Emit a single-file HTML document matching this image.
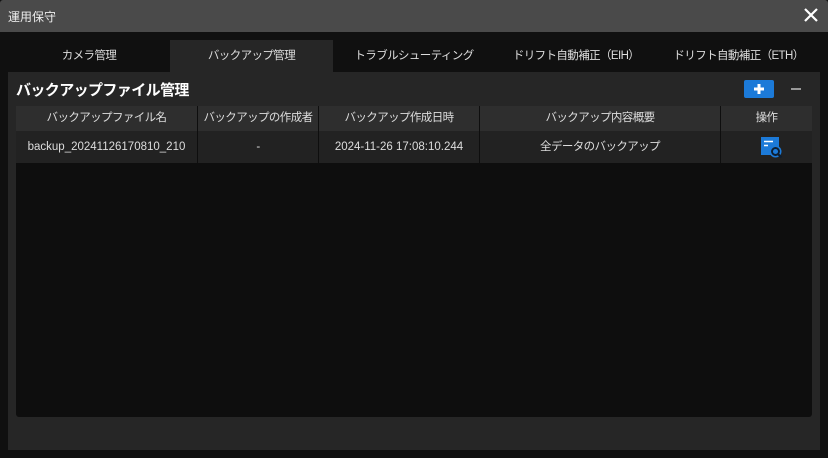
<!DOCTYPE html>
<html><head><meta charset="utf-8"><style>
*{margin:0;padding:0;box-sizing:border-box}
body{width:828px;height:458px;background:#101010;font-family:"Liberation Sans","Noto Sans CJK JP",sans-serif;color:#e6e6e6;position:relative;overflow:hidden;font-size:12px}
.title{position:absolute;left:0;top:0;width:828px;height:32px;background:#4a4a4a;border-radius:3px 3px 0 0}
.title span{position:absolute;left:8px;top:8px;font-size:12px;color:#eee}
.x{position:absolute;right:10px;top:8px}
.tab{position:absolute;top:40px;height:32px;line-height:32px;text-align:center;font-size:11.5px;letter-spacing:-0.6px;color:#ddd}
.panel{position:absolute;left:8px;top:72px;width:812px;height:378px;background:#262626}
.h{position:absolute;left:16px;top:79px;font-size:15px;letter-spacing:-0.6px;font-weight:bold;color:#fff}
.plus{position:absolute;left:744px;top:80px;width:30px;height:18px;background:#1c7ad8;border-radius:2px}
.minus{position:absolute;left:791px;top:88px;width:10px;height:2px;background:#999}
.tbl{position:absolute;left:16px;top:106px;width:796px;height:311px;background:#0e0e0e;border-radius:0 0 3px 3px}
.row{position:absolute;left:0;width:796px}
.c{position:absolute;top:0;height:100%;text-align:center;border-right:1px solid #0e0e0e;font-size:11.5px;color:#ddd;letter-spacing:-0.6px}
.n{letter-spacing:0}
</style></head><body>
<div class="title"><span>運用保守</span>
<svg class="x" width="14" height="14" viewBox="0 0 14 14"><path d="M1 1L13 13M13 1L1 13" stroke="#fff" stroke-width="2.2"/></svg></div>
<div class="tab" style="left:8px;width:162px">カメラ管理</div>
<div class="tab" style="left:170px;width:163px;background:#262626">バックアップ管理</div>
<div class="tab" style="left:333px;width:162px">トラブルシューティング</div>
<div class="tab" style="left:495px;width:162px">ドリフト自動補正（EIH）</div>
<div class="tab" style="left:657px;width:163px">ドリフト自動補正（ETH）</div>
<div class="panel"></div>
<div class="h">バックアップファイル管理</div>
<div class="plus"><svg width="30" height="18"><path d="M15 4V14M10 9H20" stroke="#fff" stroke-width="3"/></svg></div>
<div class="minus"></div>
<div class="tbl">
<div class="row" style="top:0;height:25px;background:#2e2e2e;line-height:25px">
<div class="c" style="left:0;width:182px">バックアップファイル名</div>
<div class="c" style="left:182px;width:121px">バックアップの作成者</div>
<div class="c" style="left:303px;width:161px">バックアップ作成日時</div>
<div class="c" style="left:464px;width:241px">バックアップ内容概要</div>
<div class="c" style="left:705px;width:91px;border:none">操作</div>
</div>
<div class="row" style="top:25px;height:32px;background:#222;line-height:32px">
<div class="c n" style="left:0;width:182px">backup_20241126170810_210</div>
<div class="c" style="left:182px;width:121px">-</div>
<div class="c n" style="left:303px;width:161px">2024-11-26 17:08:10.244</div>
<div class="c" style="left:464px;width:241px">全データのバックアップ</div>
<div class="c" style="left:705px;width:91px;border:none">
<svg style="position:absolute;left:40px;top:6px" width="22" height="22" viewBox="0 0 22 22"><rect x="0" y="0" width="18" height="18" fill="#1c7ad8"/><path d="M3 4.5H12M3 8.5H7" stroke="#fff" stroke-width="1.6"/><circle cx="14.5" cy="14.5" r="6" fill="#1c7ad8"/><circle cx="14.5" cy="14.5" r="3.5" fill="none" stroke="#0e1e30" stroke-width="1.9"/><path d="M17 17L20.5 20.5" stroke="#0e1e30" stroke-width="2.2"/></svg></div>
</div>
</div>
</body></html>
